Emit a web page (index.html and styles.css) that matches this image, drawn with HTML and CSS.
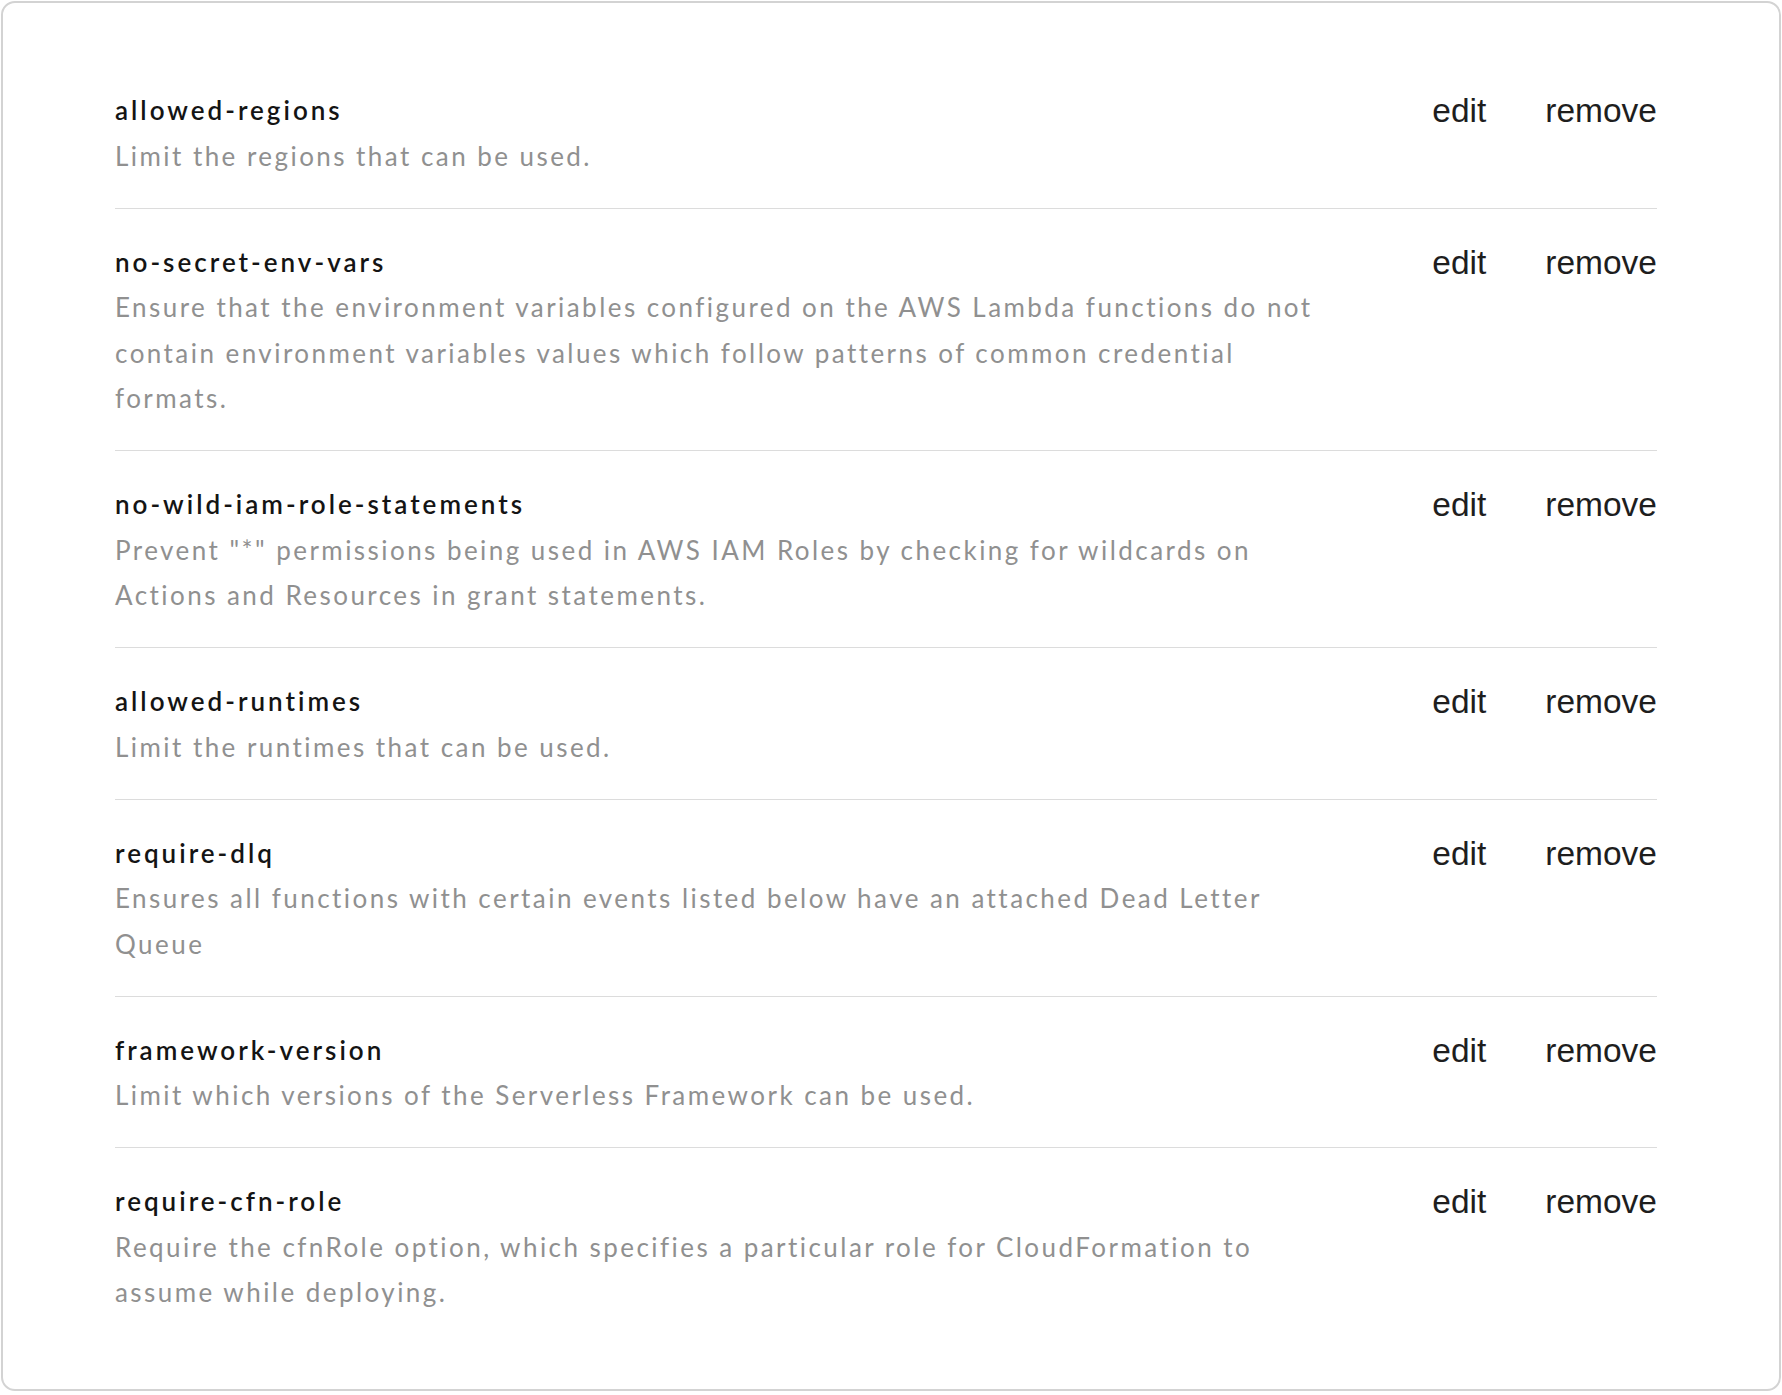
FILE: index.html
```html
<!DOCTYPE html>
<html lang="en">
<head>
<meta charset="utf-8">
<title>Policies</title>
<link rel="stylesheet" href="styles.css">
</head>
<body>
<div class="card">
  <ul class="rules">
    <li class="rule">
      <div class="info">
        <div class="name">allowed-regions</div>
        <div class="desc">Limit the regions that can be used.</div>
      </div>
      <div class="actions"><a class="act">edit</a><a class="act">remove</a></div>
    </li>
    <li class="rule">
      <div class="info">
        <div class="name">no-secret-env-vars</div>
        <div class="desc">Ensure that the environment variables configured on the AWS Lambda functions do not contain environment variables values which follow patterns of common credential formats.</div>
      </div>
      <div class="actions"><a class="act">edit</a><a class="act">remove</a></div>
    </li>
    <li class="rule">
      <div class="info">
        <div class="name">no-wild-iam-role-statements</div>
        <div class="desc">Prevent "*" permissions being used in AWS IAM Roles by checking for wildcards on Actions and Resources in grant statements.</div>
      </div>
      <div class="actions"><a class="act">edit</a><a class="act">remove</a></div>
    </li>
    <li class="rule">
      <div class="info">
        <div class="name">allowed-runtimes</div>
        <div class="desc">Limit the runtimes that can be used.</div>
      </div>
      <div class="actions"><a class="act">edit</a><a class="act">remove</a></div>
    </li>
    <li class="rule">
      <div class="info">
        <div class="name">require-dlq</div>
        <div class="desc">Ensures all functions with certain events listed below have an attached Dead Letter Queue</div>
      </div>
      <div class="actions"><a class="act">edit</a><a class="act">remove</a></div>
    </li>
    <li class="rule">
      <div class="info">
        <div class="name">framework-version</div>
        <div class="desc">Limit which versions of the Serverless Framework can be used.</div>
      </div>
      <div class="actions"><a class="act">edit</a><a class="act">remove</a></div>
    </li>
    <li class="rule">
      <div class="info">
        <div class="name">require-cfn-role</div>
        <div class="desc">Require the cfnRole option, which specifies a particular role for CloudFormation to assume while deploying.</div>
      </div>
      <div class="actions"><a class="act">edit</a><a class="act">remove</a></div>
    </li>
  </ul>
</div>
</body>
</html>
```
FILE: styles.css
```css
html, body {
  margin: 0;
  padding: 0;
  background: #ffffff;
}
body {
  padding: 1px;
  font-family: Lato, "Open Sans", sans-serif;
}
.card {
  box-sizing: border-box;
  height: 1390px;
  width: 1780px;
  border: 2px solid #d3d3d3;
  border-radius: 14px;
  padding: 85px 122px 0 112px;
  background: #fff;
}
.rules {
  list-style: none;
  margin: 0;
  padding: 0;
}
.rule {
  display: flex;
  justify-content: space-between;
  align-items: flex-start;
  padding: 31px 0 28.5px;
  border-bottom: 1px solid #dcdcdc;
}
.rule:first-child {
  padding-top: 0;
}
.rule:last-child {
  border-bottom: none;
}
.info {
  width: 1218px;
}
.name {
  font-size: 26px;
  line-height: 45.5px;
  font-weight: 600;
  letter-spacing: 3px;
  color: #141414;
}
.desc {
  font-size: 26px;
  line-height: 45.5px;
  letter-spacing: 2.45px;
  color: #909090;
}
.actions {
  display: flex;
  gap: 59px;
  font-family: "Liberation Sans", Arial, sans-serif;
  font-size: 33.5px;
  line-height: 45.5px;
  color: #1e1e1e;
}
.act {
  cursor: pointer;
}
```
